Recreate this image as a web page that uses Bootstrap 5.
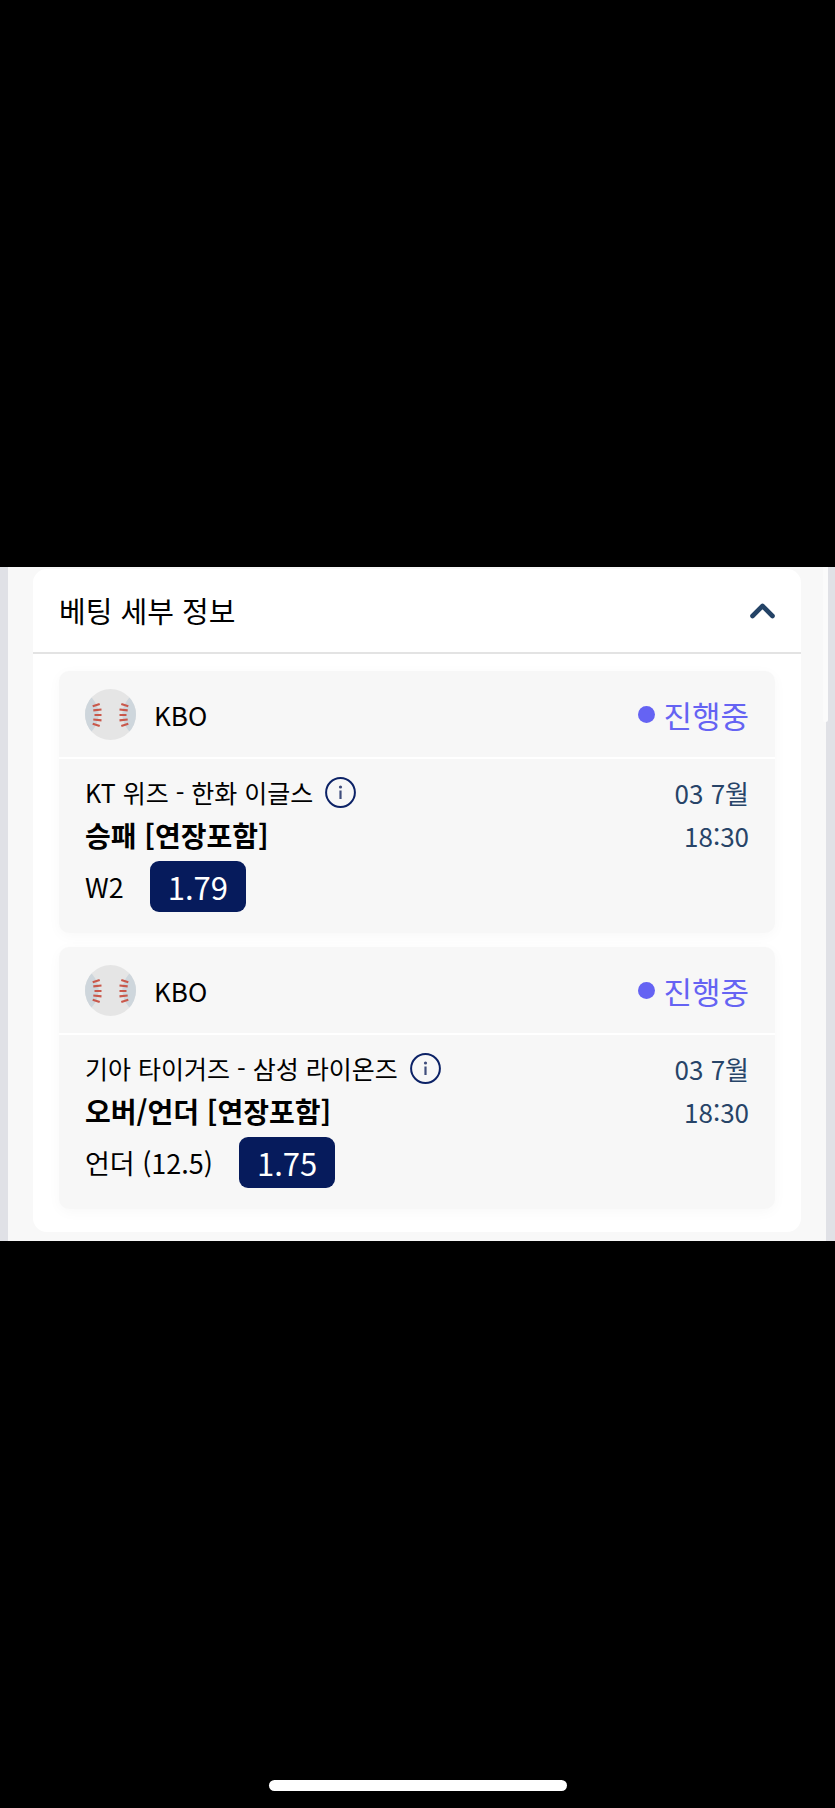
<!DOCTYPE html>
<html lang="ko">
<head>
<meta charset="utf-8">
<meta name="viewport" content="width=device-width, initial-scale=1">
<title>베팅 세부 정보</title>
<link href="https://cdn.jsdelivr.net/npm/bootstrap@5.3.0/dist/css/bootstrap.min.css" rel="stylesheet">
<style>
  body { background: #000; color: #000; font-family: "Noto Sans CJK KR", sans-serif; font-size: 26px; line-height: 43px; }
  .screen { display: grid; grid-template-rows: 1fr auto 1fr; }
  .viewer { background: #e0e1e6; padding: 0 9px 0 8px; }
  .sheet { background: #f8f8f8; padding: 2px 25px 9px 25px; }
  .scroll-thumb { top: 0; right: 7px; width: 5px; height: 155px; background: #fbfbfb; border-radius: 0 0 3px 3px; }
  .details { background: #fff; border-radius: 14px; }
  .details-head { height: 85px; border-bottom: 2px solid #e3e3e3; padding: 0 26px; }
  .details-head h1 { font-size: 29px; font-weight: 400; line-height: 43px; }
  .bets { padding: 17px 26px 23px; gap: 14px; }
  .bet { background: #f7f7f7; border-radius: 10px; box-shadow: 0 3px 14px rgba(0, 0, 0, .03); }
  .bet-head { height: 88px; padding: 0 26px; border-bottom: 2px solid #fff; }
  .bet-body { padding: 12px 26px 21px; }
  .league { gap: 18px; }
  .state { color: #6563f3; font-size: 31px; gap: 8px; }
  .dot { width: 17px; height: 17px; background: #6563f3; }
  .market { font-size: 28px; font-weight: 700; line-height: 43px; }
  .when { color: #274468; }
  .teams { font-size: 25px; gap: 12px; }
  .pick { font-size: 27px; gap: 26px; margin-top: 4px; }
  .odds { background: #061b5c; color: #fff; font-size: 31px; line-height: 51px; padding: 0 18px; border-radius: 9px; }
  .home-bar { width: 298px; height: 11px; margin-bottom: 17px; background: #fff; }
  svg { display: block; flex: none; }
</style>
</head>
<body>
<svg width="0" height="0" class="position-absolute" aria-hidden="true">
  <defs>
    <clipPath id="round"><circle cx="25.500" cy="25.500" r="25.500"/></clipPath>
    <symbol id="ball" viewBox="0 0 51 51">
      <g clip-path="url(#round)">
        <rect width="51" height="51" fill="#e5e5e5"/>
        <path d="M0 0L7 9C16 19 16 32 7 42L0 51ZM51 0L44 9C35 19 35 32 44 42L51 51Z" fill="#ced6dc"/>
      </g>
      <path d="M7.700 17.300L14.700 15M8.300 21.300L16.500 20.500M9.500 26H16.500M8.300 30.500L16.500 31.300M7.700 34.700L14.700 37M43.300 17.300L36.300 15M42.700 21.300L34.500 20.500M41.500 26H34.500M42.700 30.500L34.500 31.300M43.300 34.700L36.300 37" fill="none" stroke="#c9584b" stroke-width="2.200"/>
    </symbol>
    <symbol id="info" viewBox="0 0 31 31">
      <circle cx="15.500" cy="15.500" r="14.400" fill="none" stroke="#0c2266" stroke-width="2"/>
      <circle cx="15.500" cy="10" r="1.600" fill="#3f4d7c"/>
      <path d="M15.500 13.500V22" stroke="#3f4d7c" stroke-width="2.200"/>
    </symbol>
  </defs>
</svg>
<div class="screen min-vh-100">
  <div></div>
  <main class="viewer position-relative">
    <div class="sheet">
      <section class="details">
        <header class="details-head d-flex align-items-center justify-content-between">
          <h1 class="m-0">베팅 세부 정보</h1>
          <button type="button" class="btn p-0 border-0" aria-label="접기" data-bs-toggle="collapse" data-bs-target="#bets" aria-expanded="true">
            <svg width="25" height="16" viewBox="0 0 25 16"><path d="M2.500 13L12.500 3L22.500 13" fill="none" stroke="#244366" stroke-width="4.600" stroke-linecap="round" stroke-linejoin="round"/></svg>
          </button>
        </header>
        <div class="collapse show" id="bets">
          <div class="bets d-flex flex-column">
            <article class="bet">
              <div class="bet-head d-flex align-items-center justify-content-between">
                <div class="league d-flex align-items-center"><svg width="51" height="51" aria-hidden="true"><use href="#ball"/></svg><span>KBO</span></div>
                <div class="state d-flex align-items-center"><span class="dot rounded-circle"></span><span>진행중</span></div>
              </div>
              <div class="bet-body d-flex justify-content-between">
                <div>
                  <div class="teams d-flex align-items-center"><span>KT 위즈 - 한화 이글스</span><button type="button" class="btn p-0 border-0" aria-label="정보"><svg width="31" height="31"><use href="#info"/></svg></button></div>
                  <div class="market">승패 [연장포함]</div>
                  <div class="pick d-flex align-items-center"><span>W2</span><span class="odds">1.79</span></div>
                </div>
                <div class="when text-end"><div>03 7월</div><div>18:30</div></div>
              </div>
            </article>
            <article class="bet">
              <div class="bet-head d-flex align-items-center justify-content-between">
                <div class="league d-flex align-items-center"><svg width="51" height="51" aria-hidden="true"><use href="#ball"/></svg><span>KBO</span></div>
                <div class="state d-flex align-items-center"><span class="dot rounded-circle"></span><span>진행중</span></div>
              </div>
              <div class="bet-body d-flex justify-content-between">
                <div>
                  <div class="teams d-flex align-items-center"><span>기아 타이거즈 - 삼성 라이온즈</span><button type="button" class="btn p-0 border-0" aria-label="정보"><svg width="31" height="31"><use href="#info"/></svg></button></div>
                  <div class="market">오버/언더 [연장포함]</div>
                  <div class="pick d-flex align-items-center"><span>언더 (12.5)</span><span class="odds">1.75</span></div>
                </div>
                <div class="when text-end"><div>03 7월</div><div>18:30</div></div>
              </div>
            </article>
          </div>
        </div>
      </section>
    </div>
    <div class="scroll-thumb position-absolute"></div>
  </main>
  <div class="d-flex justify-content-center align-items-end"><div class="home-bar rounded-pill"></div></div>
</div>
<script src="https://cdn.jsdelivr.net/npm/bootstrap@5.3.0/dist/js/bootstrap.bundle.min.js"></script>
</body>
</html>
